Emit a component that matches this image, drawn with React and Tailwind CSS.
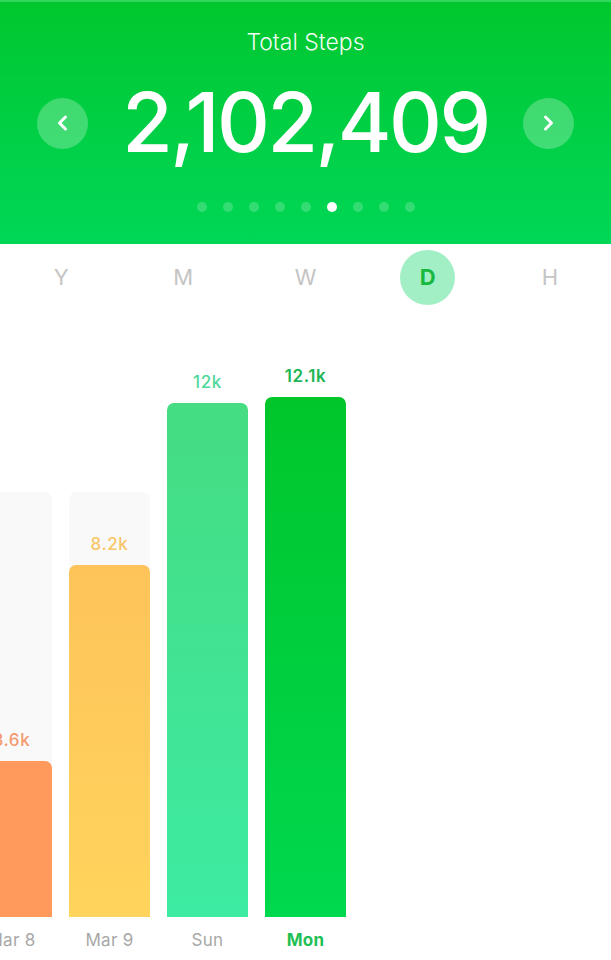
import React from "react";

const tabs = ["Y", "M", "W", "D", "H"];

const bars = [
  { day: "Mar 8", value: "3.6k", h: 156, bar: "bg-[#ff9a5c]", text: "text-[#f59a6e] font-medium", dayText: "text-[#a8a8a8] font-normal" },
  { day: "Mar 9", value: "8.2k", h: 352, bar: "bg-gradient-to-b from-[#fec45a] to-[#ffd45c]", text: "text-[#f7c667] font-medium", dayText: "text-[#a8a8a8] font-normal" },
  { day: "Sun", value: "12k", h: 514, bar: "bg-gradient-to-b from-[#45dc82] to-[#3deba2]", text: "text-[#4fd89c] font-medium", dayText: "text-[#a8a8a8] font-normal" },
  { day: "Mon", value: "12.1k", h: 520, bar: "bg-gradient-to-b from-[#00c62a] to-[#00d84e]", text: "text-[#1fb656] font-semibold", dayText: "text-[#1fc055] font-bold" },
];

function Chevron({ dir }) {
  return (
    <svg width="20" height="20" viewBox="0 0 20 20" fill="none">
      <path
        d={dir === "left" ? "M12.5 4 L6.5 10 L12.5 16" : "M7.5 4 L13.5 10 L7.5 16"}
        stroke="white"
        strokeWidth="3"
        strokeLinecap="round"
        strokeLinejoin="round"
      />
    </svg>
  );
}

export default function App() {
  return (
    <div className="w-[611px] h-[960px] overflow-hidden bg-white font-['Inter',sans-serif]">
      {/* Header */}
      <div className="h-[244px] bg-gradient-to-b from-[#00c72d] to-[#00d756] border-t-2 border-[#2fd85a] flex flex-col items-center">
        <p className="mt-[24px] text-[23px] font-light text-white/95 leading-[32px]">Total Steps</p>
        <div className="mt-[15px] w-full flex items-center justify-between px-[37px]">
          <button className="w-[51px] h-[51px] rounded-full bg-white/25 flex items-center justify-center">
            <Chevron dir="left" />
          </button>
          <span className="text-[82px] font-medium text-white leading-[100px] tracking-[-2.5px]">2,102,409</span>
          <button className="w-[51px] h-[51px] rounded-full bg-white/25 flex items-center justify-center">
            <Chevron dir="right" />
          </button>
        </div>
        <div className="mt-[29px] flex gap-[16px]">
          {Array.from({ length: 9 }).map((_, i) => (
            <span key={i} className={`w-[10px] h-[10px] rounded-full ${i === 5 ? "bg-white" : "bg-white/20"}`} />
          ))}
        </div>
      </div>

      {/* Tabs */}
      <div className="grid grid-cols-5 h-[66px] items-center">
        {tabs.map((t) => (
          <div key={t} className="flex justify-center">
            {t === "D" ? (
              <span className="w-[55px] h-[55px] rounded-full bg-[#a2efc6] flex items-center justify-center text-[22px] font-bold text-[#17b941]">
                D
              </span>
            ) : (
              <span className="text-[22px] text-[#c4c4c4]">{t}</span>
            )}
          </div>
        ))}
      </div>

      {/* Chart */}
      <div className="mt-[182px] ml-[-29px] flex gap-[17px]">
        {bars.map((b) => (
          <div key={b.day} className="w-[81px] flex flex-col items-center">
            <div className="w-full h-[425px] rounded-t-[8px] bg-[#f9f9f9] flex flex-col justify-end items-center">
              <span className={`shrink-0 text-[17px] leading-[20px] tracking-[0.6px] ${b.text}`}>{b.value}</span>
              <div className={`shrink-0 mt-[11px] w-full rounded-t-[7px] ${b.bar}`} style={{ height: b.h }} />
            </div>
            <span className={`mt-[12px] text-[17px] leading-[22px] tracking-[0.3px] ${b.dayText}`}>{b.day}</span>
          </div>
        ))}
      </div>
    </div>
  );
}
